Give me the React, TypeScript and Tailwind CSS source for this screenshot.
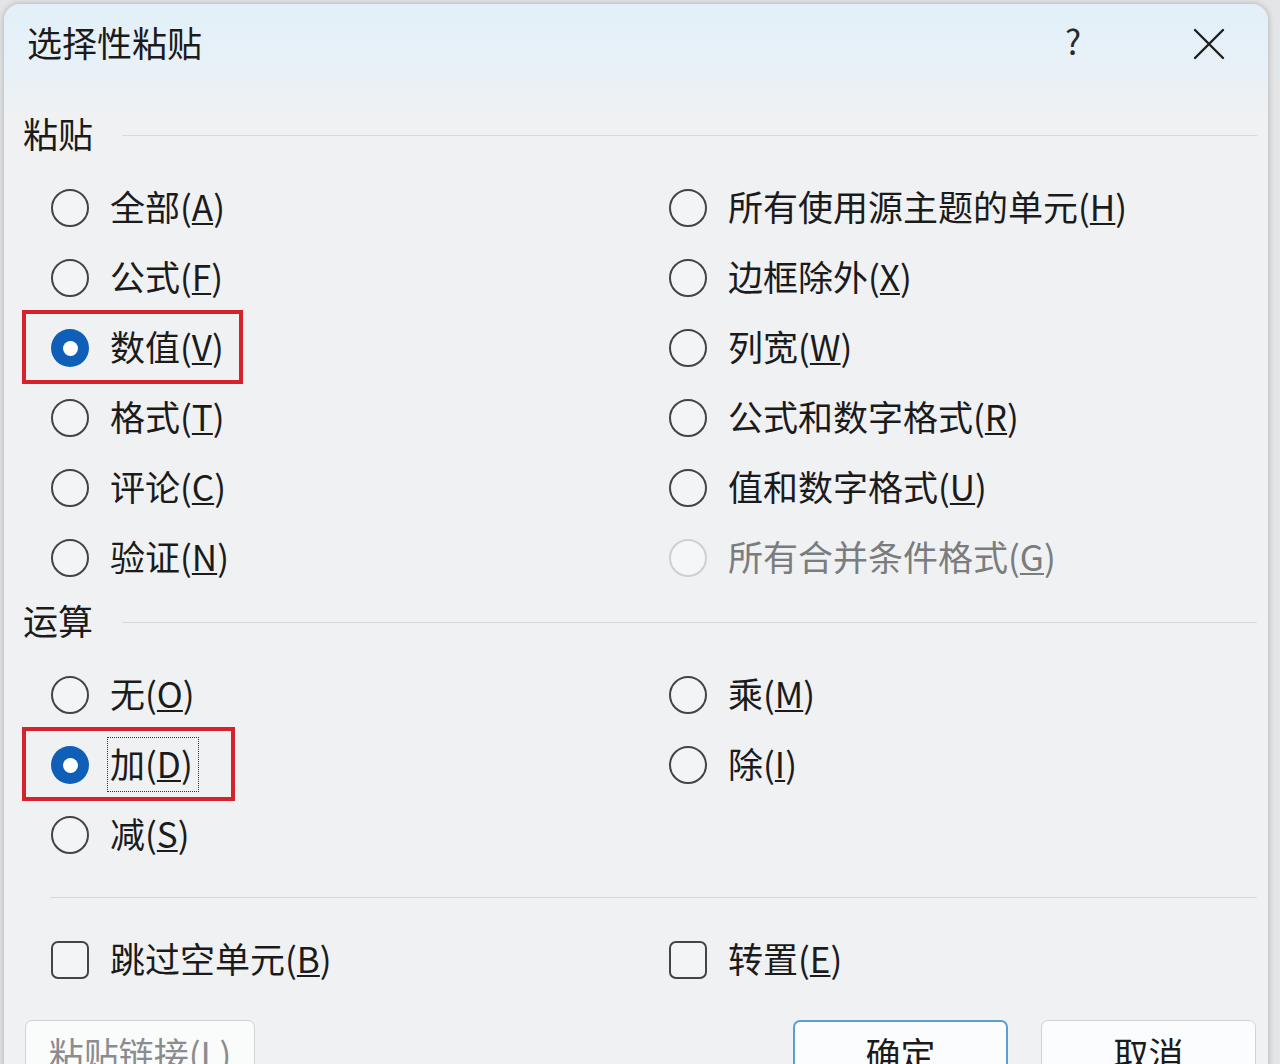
import React from "react";

type Opt = { text: string; key: string; checked?: boolean; disabled?: boolean; mark?: number; focus?: boolean };

const pasteLeft: Opt[] = [
  { text: "全部", key: "A" },
  { text: "公式", key: "F" },
  { text: "数值", key: "V", checked: true, mark: 221 },
  { text: "格式", key: "T" },
  { text: "评论", key: "C" },
  { text: "验证", key: "N" },
];

const pasteRight: Opt[] = [
  { text: "所有使用源主题的单元", key: "H" },
  { text: "边框除外", key: "X" },
  { text: "列宽", key: "W" },
  { text: "公式和数字格式", key: "R" },
  { text: "值和数字格式", key: "U" },
  { text: "所有合并条件格式", key: "G", disabled: true },
];

const opLeft: Opt[] = [
  { text: "无", key: "O" },
  { text: "加", key: "D", checked: true, mark: 213, focus: true },
  { text: "减", key: "S" },
];

const opRight: Opt[] = [
  { text: "乘", key: "M" },
  { text: "除", key: "I" },
];

function Radio({ checked, disabled }: { checked?: boolean; disabled?: boolean }) {
  if (checked) {
    return (
      <span className="flex h-[38px] w-[38px] shrink-0 items-center justify-center rounded-full bg-[#0f5fb8]">
        <span className="h-[15px] w-[15px] rounded-full bg-white" />
      </span>
    );
  }
  return (
    <span
      className={
        disabled
          ? "h-[38px] w-[38px] shrink-0 rounded-full border-2 border-[#cdd0d3] bg-[#f5f6f7]"
          : "h-[38px] w-[38px] shrink-0 rounded-full border-2 border-[#444444] bg-[#f3f4f5]"
      }
    />
  );
}

function Label({ text, k, disabled }: { text: string; k: string; disabled?: boolean }) {
  return (
    <span
      className={
        disabled
          ? "relative top-[-3px] text-[35px] leading-none text-[#7a7c7e]"
          : "relative top-[-3px] text-[35px] leading-none text-[#1b1b1b]"
      }
    >
      {text}(<span className="underline decoration-[1.5px] underline-offset-[2px]">{k}</span>)
    </span>
  );
}

function RadioRow({ o }: { o: Opt }) {
  return (
    <div className="relative flex h-[70px] items-center gap-[21px]">
      <Radio checked={o.checked} disabled={o.disabled} />
      <Label text={o.text} k={o.key} disabled={o.disabled} />
      {o.mark && (
        <div
          className="absolute left-[-29px] top-[-3px] h-[74px] border-[4px] border-[#d5222b]"
          style={{ width: o.mark }}
        />
      )}
      {o.focus && (
        <div className="absolute left-[56px] top-[7px] h-[55px] w-[92px] border border-dotted border-[#333]" />
      )}
    </div>
  );
}

function Heading({ text, h }: { text: string; h: string }) {
  return (
    <div className={`flex items-center pl-[19px] pr-[11px] ${h}`}>
      <span className="relative top-[-3px] text-[35px] leading-none text-[#1b1b1b]">{text}</span>
      <div className="ml-[29px] h-px flex-1 bg-[#d7dadd]" />
    </div>
  );
}

function Check({ text, k }: { text: string; k: string }) {
  return (
    <div className="flex h-[70px] items-center gap-[21px]">
      <span className="h-[38px] w-[38px] shrink-0 rounded-[7px] border-2 border-[#444444] bg-[#f3f4f5]" />
      <Label text={text} k={k} />
    </div>
  );
}

export default function App() {
  return (
    <div className="h-[1064px] w-[1280px] overflow-hidden bg-[#e4e5e6] pl-[4px] pr-[12px] pt-[4px] font-['Noto_Sans_CJK_SC','Microsoft_YaHei',sans-serif]">
      <div className="h-[1100px] rounded-t-[16px] bg-[linear-gradient(to_bottom,#e3f0f9_0px,#e8f1f7_70px,#eff1f3_110px,#eff1f3_100%)] shadow-[0_0_6px_rgba(0,0,0,0.25)]">
        {/* title bar */}
        <div className="flex h-[80px] items-center pl-[23px]">
          <span className="relative top-[-3px] text-[35px] leading-none text-[#1b1b1b]">选择性粘贴</span>
          <span className="relative top-[-3px] ml-auto text-[34px] leading-none text-[#2a2a2a]">?</span>
          <svg className="ml-[112px] mr-[43px]" width="32" height="32" viewBox="0 0 32 32">
            <path d="M2 2 L30 30 M30 2 L2 30" stroke="#1f1f1f" strokeWidth="2.4" strokeLinecap="round" />
          </svg>
        </div>

        <div className="mt-[16px]">
          <Heading text="粘贴" h="h-[70px]" />
        </div>
        <div className="mt-[3px] grid grid-cols-[618px_1fr] pl-[47px]">
          <div className="flex flex-col">
            {pasteLeft.map((o) => (
              <RadioRow key={o.key} o={o} />
            ))}
          </div>
          <div className="flex flex-col">
            {pasteRight.map((o) => (
              <RadioRow key={o.key} o={o} />
            ))}
          </div>
        </div>

        <Heading text="运算" h="h-[58px]" />
        <div className="mt-[9px] grid grid-cols-[618px_1fr] pl-[47px]">
          <div className="flex flex-col">
            {opLeft.map((o) => (
              <RadioRow key={o.key} o={o} />
            ))}
          </div>
          <div className="flex flex-col">
            {opRight.map((o) => (
              <RadioRow key={o.key} o={o} />
            ))}
          </div>
        </div>

        <div className="ml-[46px] mr-[11px] mt-[27px] h-px bg-[#d7dadd]" />

        <div className="mt-[27px] grid grid-cols-[618px_1fr] pl-[47px]">
          <Check text="跳过空单元" k="B" />
          <Check text="转置" k="E" />
        </div>

        {/* buttons */}
        <div className="mt-[25px] flex pl-[21px] pr-[12px]">
          <button className="flex h-[64px] w-[230px] justify-center rounded-[7px] border border-[#d0d2d4] bg-[#fafbfb] pt-[14px] text-[35px] leading-none text-[#8a8c8e]">
            粘贴链接(L)
          </button>
          <button className="ml-auto flex h-[64px] w-[215px] justify-center rounded-[7px] border-2 border-[#5a9fd4] bg-[#fbfcfd] pt-[13px] text-[35px] leading-none text-[#1b1b1b]">
            确定
          </button>
          <button className="ml-[33px] flex h-[64px] w-[215px] justify-center rounded-[7px] border border-[#d0d2d4] bg-[#fbfcfd] pt-[14px] text-[35px] leading-none text-[#1b1b1b]">
            取消
          </button>
        </div>
      </div>
    </div>
  );
}
